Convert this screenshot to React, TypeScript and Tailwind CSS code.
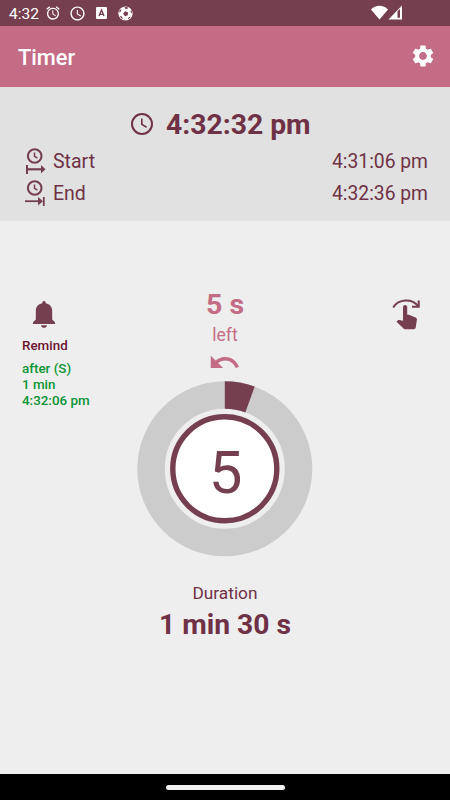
import type { ReactNode } from 'react';
import { MdAlarm, MdAccessTime, MdSettings, MdUndo } from 'react-icons/md';

const TOTAL = 90;
const LEFT = 5;

function BallIcon() {
  return (
    <svg width="15" height="15" viewBox="0 0 15 15" className="ml-[11px]">
      <circle cx="7.5" cy="7.5" r="7.1" fill="#fff" />
      <g fill="#763f4f">
        <path d="M7 5.2L9.9 6.2L9.8 9.2L7 10.2L5.1 7.8Z" />
        <path d="M6.4 1.2L7.6 3L10.2 2.6L9.2 1.1Z" />
        <path d="M1 6.6L2.9 5.4L3.4 3L1.7 4.2Z" />
        <path d="M14 7.4L12.6 6.2L12.8 4L13.8 5Z" />
        <path d="M1.8 9.8L3.8 10.4L5 12.9L3 12Z" />
        <path d="M12.8 10.8L11 10.9L9.6 13L11.4 12.6Z" />
      </g>
    </svg>
  );
}

function StatusBar() {
  return (
    <div className="flex h-[26px] items-center bg-[#763f4f] pl-[9px] text-white">
      <span className="w-[36px] pt-[3px] text-[15.5px] leading-none">4:32</span>
      <MdAlarm size={16} />
      <MdAccessTime size={17} className="ml-[8px]" />
      <svg width="11" height="12" viewBox="0 0 11 12" className="ml-[10px]">
        <rect width="11" height="12" rx="1" fill="#fff" />
        <path
          d="M3 9L5.5 3L8 9M3.8 7.4H7.2"
          fill="none"
          stroke="#763f4f"
          strokeWidth="1.4"
        />
      </svg>
      <BallIcon />
      <svg width="32" height="15" viewBox="0 0 32 15" className="mt-[-1px] ml-[238px]">
        <path d="M0 4.4C4.6 -0.5 12.4 -0.5 17 4.4L8.5 14.4Z" fill="#fff" />
        <path d="M17.5 14.4L31 0.5V14.4Z" fill="#fff" />
        <path d="M26.5 6.2L29 4V12.8H26.5Z" fill="#763f4f" />
      </svg>
    </div>
  );
}

function StartIcon() {
  return (
    <svg width="22" height="27" viewBox="0 0 22 27" fill="none" stroke="#763f4f">
      <circle cx="9.7" cy="8" r="6.8" strokeWidth="2.1" />
      <path d="M9.5 4.5V8.3L12.4 10" strokeWidth="1.5" />
      <path d="M2 17V26" strokeWidth="2" />
      <path d="M2 21.3H17" strokeWidth="2.2" />
      <path d="M16 17L20.5 21.3L16 25.6Z" fill="#763f4f" stroke="none" />
    </svg>
  );
}

function EndIcon() {
  return (
    <svg width="22" height="27" viewBox="0 0 22 27" fill="none" stroke="#763f4f">
      <circle cx="9.7" cy="8" r="6.8" strokeWidth="2.1" />
      <path d="M9.5 4.5V8.3L12.4 10" strokeWidth="1.5" />
      <path d="M0 21.2H15" strokeWidth="1.8" />
      <path d="M13 17L18 21.2L13 25.4Z" fill="#763f4f" stroke="none" />
      <path d="M18.8 17V26" strokeWidth="1.8" />
    </svg>
  );
}

function TimeRow({ icon, label, time }: { icon: ReactNode; label: string; time: string }) {
  return (
    <div className="flex h-[32px] items-center pr-[22px] pl-[25px]">
      {icon}
      <span className="ml-[6px] pt-[2px] text-[19.5px]">{label}</span>
      <span className="ml-auto pt-[2px] text-[19.3px]">{time}</span>
    </div>
  );
}

function BellIcon() {
  return (
    <svg width="22" height="27" viewBox="0 0 22 27" fill="#763f4f">
      <path d="M11 0C9.7 0 9.2 1 9.2 2.3C5 3.2 2.8 6 2.8 10V18.5L0 21.3V23H22V21.3L19.2 18.5V10C19.2 6 17 3.2 12.8 2.3C12.8 1 12.3 0 11 0Z" />
      <path d="M8 24.2H14C13.5 26 12.5 26.8 11 26.8S8.5 26 8 24.2Z" />
    </svg>
  );
}

function SwipeIcon() {
  return (
    <svg width="30" height="32" viewBox="0 0 30 32">
      <path d="M1.2 8.5C6.5 -0.3 20 -0.8 26 7" fill="none" stroke="#763f4f" strokeWidth="2" />
      <path d="M26.7 1.5V7.8H20" fill="none" stroke="#763f4f" strokeWidth="2.1" />
      <path
        d="M11 8C11 5.2 15.2 5.2 15.2 8V15.7H17L23.5 18.4C24.7 18.9 25 19.7 24.9 20.8L23.8 28C23.6 29.5 22.9 30.2 21.5 30.2H13.6C12.6 30.2 12 29.9 11.3 29.2L4.5 22.7L5.7 21.4C6.1 21 6.8 20.9 7.4 21L11 21.8Z"
        fill="#763f4f"
      />
    </svg>
  );
}

function Dial() {
  const angle = (LEFT / TOTAL) * 2 * Math.PI;
  const sin = Math.sin(angle);
  const cos = Math.cos(angle);
  const slice = `M88 0.5A87.5 87.5 0 0 1 ${88 + 87.5 * sin} ${88 - 87.5 * cos}L${88 + 60 * sin} ${88 - 60 * cos}A60 60 0 0 0 88 28Z`;

  return (
    <svg width="176" height="176" viewBox="0.2 0.2 176 176">
      <circle cx="88" cy="88" r="73.75" fill="none" stroke="#cccccc" strokeWidth="27.5" />
      <path d={slice} fill="#763f4f" />
      <circle cx="88" cy="88" r="52" fill="#fff" stroke="#763f4f" strokeWidth="5.4" />
      <text x="88.8" y="112" textAnchor="middle" fontSize="60" fill="#763f4f">
        {LEFT}
      </text>
    </svg>
  );
}

export default function App() {
  return (
    <div className="flex h-[800px] w-[450px] flex-col overflow-hidden bg-[#eeeeee] font-['Roboto',sans-serif] text-[#6f3145]">
      <StatusBar />

      <header className="flex h-[61px] items-center justify-between bg-[#c46c85] pr-[14px] pl-[18px] text-white">
        <h1 className="pt-[3px] text-[21.8px] font-medium">Timer</h1>
        <MdSettings size={26} className="mt-[-1px]" />
      </header>

      <section className="h-[134px] bg-[#e1e1e1] pt-[16px]">
        <div className="flex h-[42px] items-center pl-[129px]">
          <svg
            width="26"
            height="26"
            viewBox="0 0 26 26"
            fill="none"
            stroke="currentColor"
            strokeWidth="2"
          >
            <circle cx="13" cy="13" r="10" />
            <path d="M12.8 7.5V13.4L17.6 16.2" strokeWidth="1.6" />
          </svg>
          <span className="ml-[11px] pt-[2px] text-[28.3px] font-bold">4:32:32 pm</span>
        </div>
        <TimeRow icon={<StartIcon />} label="Start" time="4:31:06 pm" />
        <TimeRow icon={<EndIcon />} label="End" time="4:32:36 pm" />
      </section>

      <main className="flex flex-1 flex-col">
        <div className="flex h-[160px] items-start">
          <div className="w-[150px] pt-[80px] pl-[22px] text-[13.4px] leading-[16px] font-medium">
            <div className="ml-[11px]">
              <BellIcon />
            </div>
            <p className="mt-[10px] text-[#6b1530]">Remind</p>
            <div className="mt-[7px] text-[#0b9535]">
              <p>after (S)</p>
              <p>1 min</p>
              <p>4:32:06 pm</p>
            </div>
          </div>
          <div className="flex w-[150px] flex-col items-center pt-[67px] text-[#c46c85]">
            <span className="text-[28.5px] leading-[34px] font-bold">5 s</span>
            <span className="mt-[2px] text-[17.6px] leading-[22px]">left</span>
            <MdUndo size={33} className="mr-[1px]" />
          </div>
          <div className="w-[150px] pt-[78px] pl-[92px]">
            <SwipeIcon />
          </div>
        </div>

        <div className="flex flex-col items-center">
          <Dial />
          <p className="mt-[25px] text-[17.3px] leading-[22px]">Duration</p>
          <p className="mt-[4px] text-[28.3px] leading-[34px] font-bold">1 min 30 s</p>
        </div>
      </main>

      <footer className="flex h-[26px] items-center justify-center bg-black">
        <div className="h-[5px] w-[119px] rounded-full bg-[#f2f2f2]" />
      </footer>
    </div>
  );
}
